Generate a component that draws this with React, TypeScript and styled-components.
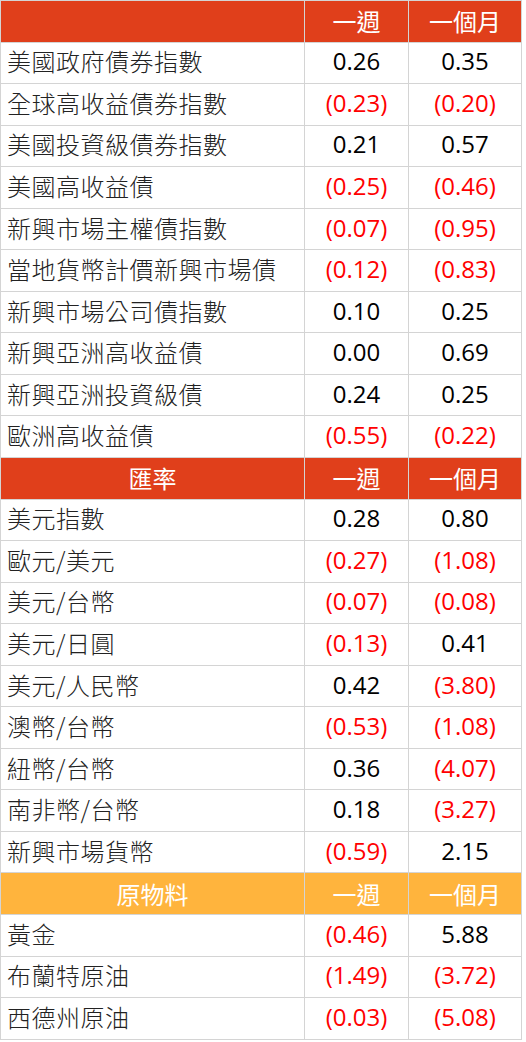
import styled, { createGlobalStyle } from "styled-components";

const GlobalStyle = createGlobalStyle`
  body {
    margin: 0;
    background: #ffffff;
  }
`;

const Table = styled.div`
  display: grid;
  grid-template-columns: 304px 104px 113px;
  grid-auto-rows: 41.56px;
  width: 522px;
  border-left: 1px solid #d4d4d4;
  border-top: 1px solid #d4d4d4;
  box-sizing: border-box;
`;

const Cell = styled.div<{ $head?: "red" | "orange"; $center?: boolean }>`
  display: flex;
  align-items: center;
  justify-content: ${p => (p.$center ? "center" : "flex-start")};
  padding: ${p => (p.$center ? "0" : "0 0 0 6px")};
  padding-bottom: ${p => (p.$head ? "1px" : "4px")};
  box-sizing: border-box;
  border-right: 1px solid #d4d4d4;
  border-bottom: 1px solid #d4d4d4;
  background: ${p =>
    p.$head === "red" ? "#e03f1b" : p.$head === "orange" ? "#ffb43d" : "#ffffff"};
  color: ${p => (p.$head ? "#ffffff" : "#222222")};
  font-family: "Noto Sans CJK TC", "Noto Sans", sans-serif;
  font-size: 24px;
  font-weight: ${p => (p.$head ? 400 : 300)};
  letter-spacing: ${p => (p.$center ? "0" : "0.5px")};
  white-space: nowrap;
`;

const Value = styled.span<{ $neg: boolean }>`
  font-family: "Open Sans", "Noto Sans", sans-serif;
  font-size: 24px;
  font-weight: 400;
  letter-spacing: 0;
  color: ${p => (p.$neg ? "#ff0000" : "#000000")};
`;

type Row = [string, string, string];

interface ISection {
  title: string;
  tone: "red" | "orange";
  rows: Row[];
}

const sections: ISection[] = [
  {
    title: "",
    tone: "red",
    rows: [
      ["美國政府債券指數", "0.26", "0.35"],
      ["全球高收益債券指數", "(0.23)", "(0.20)"],
      ["美國投資級債券指數", "0.21", "0.57"],
      ["美國高收益債", "(0.25)", "(0.46)"],
      ["新興市場主權債指數", "(0.07)", "(0.95)"],
      ["當地貨幣計價新興市場債", "(0.12)", "(0.83)"],
      ["新興市場公司債指數", "0.10", "0.25"],
      ["新興亞洲高收益債", "0.00", "0.69"],
      ["新興亞洲投資級債", "0.24", "0.25"],
      ["歐洲高收益債", "(0.55)", "(0.22)"],
    ],
  },
  {
    title: "匯率",
    tone: "red",
    rows: [
      ["美元指數", "0.28", "0.80"],
      ["歐元/美元", "(0.27)", "(1.08)"],
      ["美元/台幣", "(0.07)", "(0.08)"],
      ["美元/日圓", "(0.13)", "0.41"],
      ["美元/人民幣", "0.42", "(3.80)"],
      ["澳幣/台幣", "(0.53)", "(1.08)"],
      ["紐幣/台幣", "0.36", "(4.07)"],
      ["南非幣/台幣", "0.18", "(3.27)"],
      ["新興市場貨幣", "(0.59)", "2.15"],
    ],
  },
  {
    title: "原物料",
    tone: "orange",
    rows: [
      ["黃金", "(0.46)", "5.88"],
      ["布蘭特原油", "(1.49)", "(3.72)"],
      ["西德州原油", "(0.03)", "(5.08)"],
    ],
  },
];

function App() {
  return (
    <>
      <GlobalStyle />
      <Table>
        {sections.map(section => (
          <>
            <Cell key={`${section.title}-h`} $head={section.tone} $center>
              {section.title}
            </Cell>
            <Cell $head={section.tone} $center>
              一週
            </Cell>
            <Cell $head={section.tone} $center>
              一個月
            </Cell>
            {section.rows.map(([label, week, month]) => (
              <>
                <Cell key={label}>{label}</Cell>
                <Cell $center>
                  <Value $neg={week.startsWith("(")}>{week}</Value>
                </Cell>
                <Cell $center>
                  <Value $neg={month.startsWith("(")}>{month}</Value>
                </Cell>
              </>
            ))}
          </>
        ))}
      </Table>
    </>
  );
}

export default App;
